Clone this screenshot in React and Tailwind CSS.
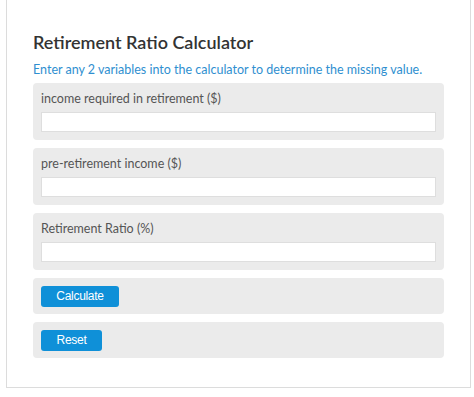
export default function App() {
    const fields = [
        'income required in retirement ($)',
        'pre-retirement income ($)',
        'Retirement Ratio (%)',
    ];

    return (
        <div className="w-[474px] h-[397px] bg-white" style={{ fontFamily: 'Lato, "Open Sans", sans-serif' }}>
            <div className="ml-[6px] w-[465px] h-[388px] border-x border-b border-[#dcdcdc] pl-[26px] pr-[26px] pt-[29px]">
                <h2 className="text-[18px] leading-[26px] font-semibold text-[#333]">Retirement Ratio Calculator</h2>
                <p className="mt-[6px] text-[12.5px] leading-[18px] text-[#2f8fd0]">
                    Enter any 2 variables into the calculator to determine the missing value.
                </p>

                <div className="mt-[4px] flex flex-col gap-[8px]">
                    {fields.map(label => (
                        <div key={label} className="bg-[#ebebeb] rounded-[4px] px-[8px] pt-[7px] pb-[8px]">
                            <p className="text-[12.5px] leading-[17px] text-[#555]">{label}</p>
                            <input
                                type="text"
                                className="mt-[5px] block w-full h-[20px] bg-white border border-[#dedede] outline-none"
                            />
                        </div>
                    ))}

                    <div className="bg-[#ebebeb] rounded-[4px] px-[8px] pt-[8px] pb-[7px]">
                        <button
                            className="block w-[78px] h-[21px] rounded-[3px] bg-[#0f90d8] text-white text-[12px] leading-[21px] tracking-[-0.3px]"
                            style={{ fontFamily: '"Liberation Sans", Arial, sans-serif' }}
                        >
                            Calculate
                        </button>
                    </div>

                    <div className="bg-[#ebebeb] rounded-[4px] px-[8px] pt-[8px] pb-[7px]">
                        <button
                            className="block w-[61px] h-[21px] rounded-[3px] bg-[#0f90d8] text-white text-[12px] leading-[21px] tracking-[-0.3px]"
                            style={{ fontFamily: '"Liberation Sans", Arial, sans-serif' }}
                        >
                            Reset
                        </button>
                    </div>
                </div>
            </div>
        </div>
    );
}
